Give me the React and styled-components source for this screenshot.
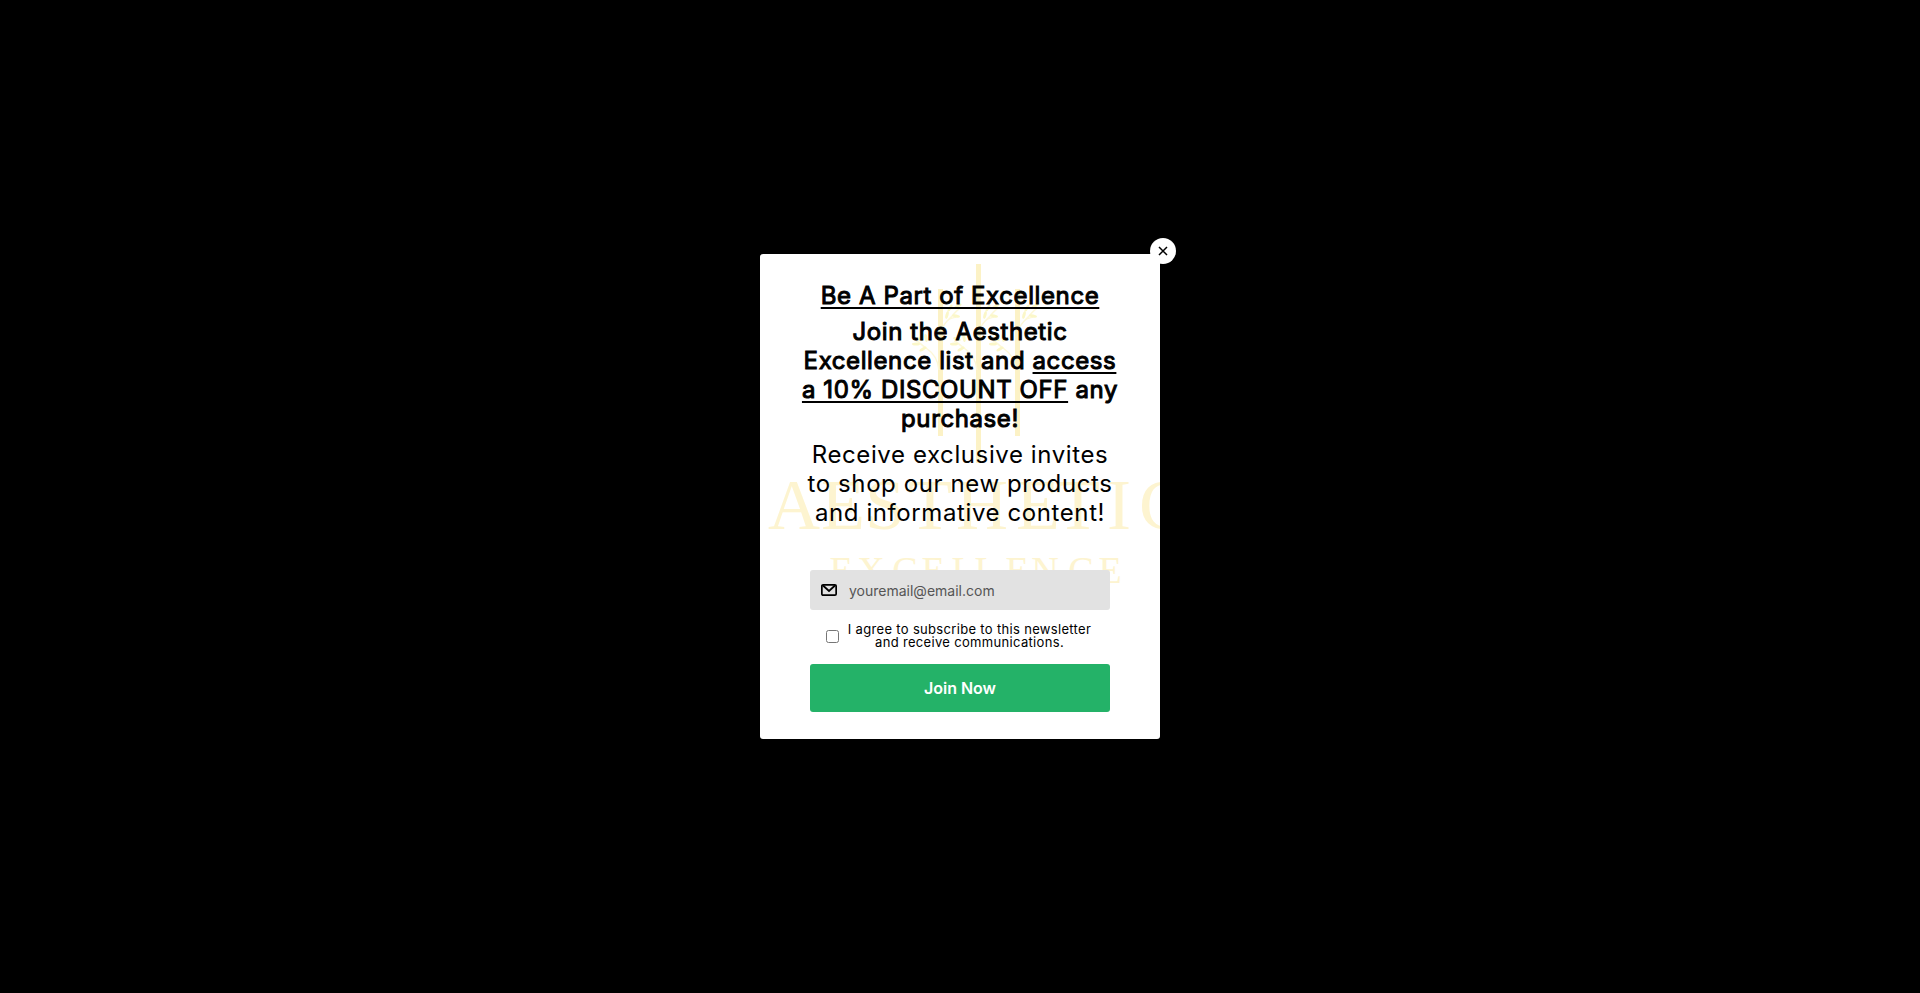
import React from 'react';
import styled, { createGlobalStyle } from 'styled-components';

const stems = [
  { x: 180, top: 35, bottom: 182 },
  { x: 218, top: 10, bottom: 209 },
  { x: 257, top: 35, bottom: 182 },
];

const leaves = [
  [10, 54, -60],
  [18, 52, -30],
  [7, 61, -75],
  [16, 62, 10],
  [-21, 85, 20],
  [-24, 90, 0],
  [-14, 84, 80],
  [-17, 95, -30],
];

const Branch = ({ x }) => (
  <g transform={`translate(${x} 0)`}>
    <path
      d="M1 77C4 68 9 66 13 61S18 55 21 54M7 67C10 64 13 64 16 63M-1 116C-2 104-8 98-14 94S-20 88-24 87"
      fill="none"
      stroke="#fdf8d8"
      strokeWidth="1.5"
    />
    {leaves.map(([cx, cy, angle]) => (
      <ellipse
        key={`${cx}-${cy}`}
        cx={cx}
        cy={cy}
        rx="4"
        ry="1.5"
        fill="#fbf7c8"
        transform={`rotate(${angle} ${cx} ${cy})`}
      />
    ))}
  </g>
);

const App = () => (
  <Page>
    <GlobalStyle />
    <Modal role="dialog" aria-labelledby="popup-title">
      <Artwork viewBox="0 0 400 485" preserveAspectRatio="xMinYMin slice" aria-hidden="true">
        {stems.map(({ x, top, bottom }) => (
          <g key={x}>
            <rect x={x - 2} y={top} width="5" height={bottom - top} fill="#fcf2c6" />
            <Branch x={x} />
          </g>
        ))}
        <g fill="#fdf4d0" fontFamily="'Liberation Serif', serif" textAnchor="middle">
          <text x="34 83 125 170 222 278 318 359 403" y="275" fontSize="72">
            AESTHETIC
          </text>
          <text x="81 111 145 173 203 226 257 285 321 350" y="329" fontSize="38">
            EXCELLENCE
          </text>
        </g>
      </Artwork>
      <Close type="button" aria-label="Close">
        <svg width="10" height="10" viewBox="0 0 10 10" stroke="#000" strokeWidth="1.5">
          <path d="M1 1l8 8M9 1L1 9" />
        </svg>
      </Close>
      <Copy>
        <Line id="popup-title" $strong>
          <u>Be A Part of Excellence</u>
        </Line>
        <Line $strong>
          Join the Aesthetic Excellence list and <u>access a 10% DISCOUNT OFF</u> any purchase!
        </Line>
        <Line>Receive exclusive invites to shop our new products and informative content!</Line>
      </Copy>
      <Form>
        <Field>
          <svg width="16" height="12" viewBox="0 0 16 12" fill="none" stroke="#000" strokeWidth="1.7">
            <rect x="0.85" y="0.85" width="14.3" height="10.3" rx="1.2" />
            <path d="M2 1.5l6 5.5 6-5.5" />
          </svg>
          <Input type="email" aria-label="Email" placeholder="youremail@email.com" />
        </Field>
        <Consent>
          <Checkbox type="checkbox" />
          <span>I agree to subscribe to this newsletter and receive communications.</span>
        </Consent>
        <Submit type="button">Join Now</Submit>
      </Form>
    </Modal>
  </Page>
);

const GlobalStyle = createGlobalStyle`
  * {
    box-sizing: border-box;
  }
  body {
    margin: 0;
    background: #000;
    color: #000;
    font-family: Inter, sans-serif;
  }
`;

const Page = styled.main`
  min-height: 100vh;
  display: flex;
  align-items: center;
  justify-content: center;
`;

const Modal = styled.section`
  position: relative;
  width: 100%;
  max-width: 400px;
  padding: 27px 40px;
  border-radius: 3px;
  background: #fff;
`;

const Artwork = styled.svg`
  position: absolute;
  top: 0;
  left: 0;
  width: 100%;
  height: 100%;
`;

const Close = styled.button`
  position: absolute;
  top: -16px;
  right: -16px;
  display: flex;
  align-items: center;
  justify-content: center;
  width: 26px;
  height: 26px;
  padding: 0;
  border: 0;
  border-radius: 50%;
  background: #fff;
  cursor: pointer;
`;

const Copy = styled.div`
  position: relative;
  display: grid;
  gap: 7px;
  text-align: center;
`;

const Line = styled.p`
  margin: 0;
  font-size: 24px;
  line-height: 29px;
  letter-spacing: 0.025em;
  -webkit-text-stroke: ${props => (props.$strong ? '1px #000' : '0')};
  u {
    text-underline-offset: 3px;
  }
`;

const Form = styled.form`
  position: relative;
  display: grid;
  margin: 43px 10px 0;
`;

const Field = styled.label`
  display: flex;
  align-items: center;
  gap: 12px;
  height: 40px;
  padding: 0 11px;
  border-radius: 3px;
  background: #e2e2e2;
`;

const Input = styled.input`
  flex: 1;
  min-width: 0;
  padding: 0;
  border: 0;
  outline: 0;
  background: none;
  font: 14px Inter, sans-serif;
  &::placeholder {
    color: #555;
  }
`;

const Consent = styled.label`
  display: flex;
  align-items: center;
  gap: 6px;
  margin: 13px 16px 15px;
  font-size: 13px;
  line-height: 13px;
  letter-spacing: 0.025em;
  text-align: center;
`;

const Checkbox = styled.input`
  flex: none;
  width: 13px;
  height: 13px;
  margin: 0;
`;

const Submit = styled.button`
  height: 48px;
  border: 0;
  border-radius: 3px;
  background: #24b268;
  color: #fff;
  font: 600 16px Inter, sans-serif;
  cursor: pointer;
`;

export default App;
